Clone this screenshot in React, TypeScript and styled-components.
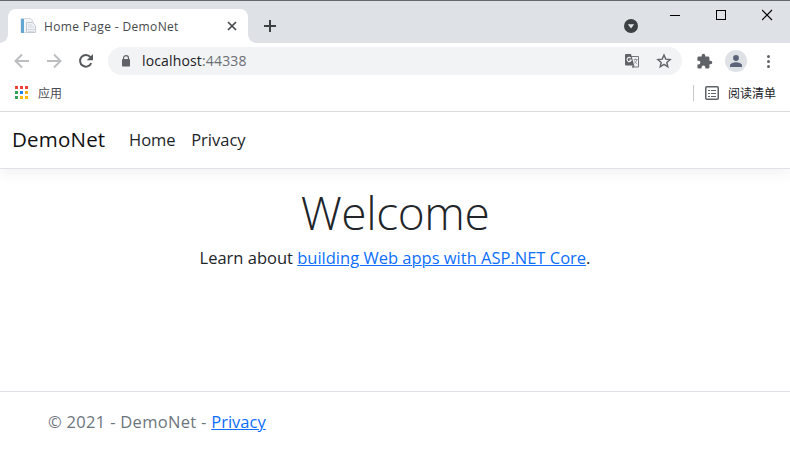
import React from "react";
import styled, { createGlobalStyle } from "styled-components";

const GlobalStyle = createGlobalStyle`
  * { box-sizing: border-box; }
  body {
    margin: 0;
    background: #fff;
    color: #212529;
    font-family: "Open Sans", "Noto Sans CJK SC", sans-serif;
    overflow: hidden;
  }
  svg { display: block; flex: none; }
`;

const Window = styled.div`
  width: 790px;
  height: 452px;
  display: flex;
  flex-direction: column;
  overflow: hidden;
`;

const TabStrip = styled.div`
  height: 43px;
  flex: none;
  display: flex;
  background: #dee1e6;
  border-top: 1px solid #66686c;
`;

const Tab = styled.div`
  position: relative;
  width: 240px;
  height: 34px;
  margin: 8px 0 0 8px;
  padding: 0 10px 0 12px;
  display: flex;
  align-items: center;
  background: #fff;
  border-radius: 8px 8px 0 0;
  &::before,
  &::after {
    content: "";
    position: absolute;
    bottom: 0;
    width: 8px;
    height: 8px;
  }
  &::before {
    left: -8px;
    background: radial-gradient(circle at 0 0, #dee1e6 7.5px, #fff 8px);
  }
  &::after {
    right: -8px;
    background: radial-gradient(circle at 100% 0, #dee1e6 7.5px, #fff 8px);
  }
`;

const TabTitle = styled.span`
  flex: 1;
  margin-left: 7px;
  padding-top: 1px;
  font-size: 12px;
  line-height: 16px;
  letter-spacing: 0.35px;
  color: #45494d;
  white-space: nowrap;
`;

const NewTab = styled.div`
  padding: 18px 0 0 15px;
  flex: 1;
`;

const TabSearch = styled.div`
  padding: 18px 0 0;
  margin-right: 32px;
`;

const WindowControls = styled.div`
  display: flex;
  gap: 35px;
  padding: 8px 17px 0 0;
`;

const Toolbar = styled.div`
  height: 36px;
  flex: none;
  display: flex;
  align-items: center;
  padding: 0 14px;
`;

const NavIcons = styled.div`
  display: flex;
  gap: 16px;
  width: 94px;
`;

const AddressBar = styled.div`
  width: 574px;
  height: 28px;
  border-radius: 14px;
  background: #f1f3f4;
  display: flex;
  align-items: center;
  padding: 0 10px 0 13px;
`;

const Url = styled.span`
  flex: 1;
  margin-left: 11px;
  font-size: 14px;
  line-height: 20px;
  letter-spacing: 0.15px;
  color: #202124;
  white-space: nowrap;
`;

const Port = styled.span`
  color: #6b6f74;
`;

const AddressActions = styled.div`
  display: flex;
  gap: 16px;
`;

const ToolbarActions = styled.div`
  flex: 1;
  display: flex;
  align-items: center;
  justify-content: flex-end;
`;

const Avatar = styled.div`
  width: 22px;
  height: 22px;
  border-radius: 50%;
  margin: 0 13px 0 12px;
  background: #dee1e6;
  display: flex;
  align-items: center;
  justify-content: center;
`;

const MenuButton = styled.div`
  width: 16px;
  padding-left: 6px;
`;

const BookmarkBar = styled.div`
  height: 33px;
  flex: none;
  display: flex;
  align-items: flex-start;
  justify-content: space-between;
  padding: 6px 14px 0 15px;
  border-bottom: 1px solid #dadce0;
  font-family: "Noto Sans CJK SC", sans-serif;
  font-size: 12px;
  line-height: 16px;
`;

const Bookmark = styled.div<{ $color: string; $gap: number }>`
  display: flex;
  align-items: center;
  gap: ${(p) => p.$gap}px;
  color: ${(p) => p.$color};
`;

const AppsButton = styled.span`
  padding-bottom: 1px;
`;

const Divider = styled.span`
  width: 1px;
  height: 16px;
  margin-right: 2px;
  background: #c6c9cd;
`;

const SiteNav = styled.nav`
  height: 57px;
  flex: none;
  display: flex;
  align-items: center;
  padding: 0 12px;
  border-bottom: 1px solid #dee2e6;
  box-shadow: 0 5px 12px rgba(0, 0, 0, 0.05);
`;

const Brand = styled.a`
  width: 117px;
  padding-bottom: 2px;
  font-size: 20.5px;
  line-height: 30px;
  letter-spacing: 0.2px;
  color: #111;
`;

const NavLink = styled.a`
  margin-right: 15.5px;
  font-size: 16.5px;
  line-height: 24px;
`;

const Main = styled.main`
  flex: 1;
  display: flex;
  flex-direction: column;
  align-items: center;
  padding-top: 14px;
`;

const Title = styled.h1`
  margin: 0;
  font-size: 46px;
  font-weight: 300;
  line-height: 58px;
  letter-spacing: -0.4px;
`;

const Lead = styled.p`
  margin: 5px 0 0;
  font-size: 16.5px;
  line-height: 24px;
  white-space: nowrap;
`;

const Link = styled.a`
  color: #0d6efd;
  text-decoration: underline;
  text-decoration-thickness: 1px;
  text-underline-offset: 1px;
`;

const Footer = styled.footer`
  height: 61px;
  flex: none;
  padding: 18px 48px 0;
  border-top: 1px solid #dee2e6;
  font-size: 16.5px;
  line-height: 24px;
  letter-spacing: 0.3px;
  color: #6c757d;
`;

const FooterLink = styled(Link)`
  letter-spacing: 0;
`;

const PageIcon = () => (
  <svg width="17" height="16" viewBox="0 0 17 16">
    <path d="M1 0.5h9l3 2v12H1z" fill="#f3f5f7" stroke="#d5dbe0" />
    <path d="M1 1h3v14H1z" fill="#62a7d2" />
    <path d="M6.5 4.5h6l3 3v7h-9z" fill="#f0f2f5" stroke="#c3c9d1" />
    <path d="M8 7h4M8 9h6M7 11.5h8M8 13.5h6" stroke="#d4dae1" />
  </svg>
);

const appColors = ["#ea4335", "#ea4335", "#ea4335", "#34a05a", "#1a83ee", "#f5ae16", "#34a05a", "#fbbc04", "#fbbc04"];

const AppsIcon = () => (
  <svg width="13" height="13" viewBox="0 0 13 13" shapeRendering="crispEdges">
    {appColors.map((c, i) => (
      <rect key={i} x={(i % 3) * 5} y={Math.floor(i / 3) * 5} width="3" height="3" fill={c} />
    ))}
  </svg>
);

const Arrow = ({ forward = false }: { forward?: boolean }) => (
  <svg width="16" height="16" viewBox="0 0 16 16" fill="none" stroke="#bbbdbf" strokeWidth="1.9">
    {forward ? <path d="M1 8h13M8 1.5L14.5 8 8 14.5" /> : <path d="M15 8H2M8 1.5L1.5 8 8 14.5" />}
  </svg>
);

const Reload = () => (
  <svg width="16" height="16" viewBox="0 0 16 16">
    <path d="M13.2 10.1A5.8 5.8 0 1 1 12.4 4.2" fill="none" stroke="#55595d" strokeWidth="2" />
    <path d="M15 1v6.3H8.7z" fill="#55595d" />
  </svg>
);

const Lock = () => (
  <svg width="10" height="12" viewBox="0 0 10 12">
    <path d="M2.5 5V3.2a2.5 2.5 0 0 1 5 0V5" fill="none" stroke="#5f6368" strokeWidth="1.2" />
    <rect x="1" y="4" width="8" height="7.5" rx="0.8" fill="#5f6368" />
  </svg>
);

const Translate = () => (
  <svg width="16" height="16" viewBox="0 0 16 16">
    <path d="M6 3.5h8.5v10.5H8" fill="none" stroke="#74787c" />
    <path d="M2 1h5l3.2 11.5H2a1 1 0 0 1-1-1V2a1 1 0 0 1 1-1z" fill="#5f6368" />
    <path d="M8.2 12.5h2.5L8.8 15z" fill="#5f6368" />
    <path d="M6.8 5.2A2.1 2.1 0 1 0 7.2 7H5.3" fill="none" stroke="#f1f3f4" strokeWidth="1.1" />
    <path d="M9.7 6.5h4M11.5 5.5v1M12.8 6.5c-.3 1.8-1.4 3-2.4 3.7M10.5 7.5c.4 1.3 1.4 2.5 2.7 3.5" fill="none" stroke="#85898c" strokeWidth=".8" />
  </svg>
);

const Star = () => (
  <svg width="16" height="16" viewBox="0 0 16 16">
    <path d="M8 2l1.75 4.1 4.4.4-3.35 2.9 1 4.35L8 11.4l-3.8 2.35 1-4.35-3.35-2.9 4.4-.4z" fill="none" stroke="#5f6368" strokeWidth="1.4" />
  </svg>
);

const Puzzle = () => (
  <svg width="17" height="17" viewBox="0 0 24 24" fill="#5f6368">
    <path d="M20.5 11H19V7c0-1.1-.9-2-2-2h-4V3.5a2.5 2.5 0 0 0-5 0V5H4c-1.1 0-2 .9-2 2v3.8h1.5a2.7 2.7 0 0 1 0 5.4H2V20c0 1.1.9 2 2 2h3.8v-1.5a2.7 2.7 0 0 1 5.4 0V22H17c1.1 0 2-.9 2-2v-4h1.5a2.5 2.5 0 0 0 0-5z" />
  </svg>
);

const Person = () => (
  <svg width="12" height="12" viewBox="0 0 12 12" fill="#5a6377">
    <circle cx="6" cy="3" r="2.9" />
    <path d="M0 12v-1.6C0 8 4 7.2 6 7.2s6 .8 6 3.2V12z" />
  </svg>
);

const More = () => (
  <svg width="5" height="14" viewBox="0 0 5 14" fill="#5f6368">
    <circle cx="2.5" cy="2.5" r="1.5" />
    <circle cx="2.5" cy="7.5" r="1.5" />
    <circle cx="2.5" cy="12.5" r="1.5" />
  </svg>
);

const ReadingList = () => (
  <svg width="14" height="14" viewBox="0 0 14 14">
    <rect x=".75" y=".75" width="12.5" height="12.5" rx="1" fill="none" stroke="#5f6368" strokeWidth="1.5" />
    <path d="M3 4.5h2M6 4.5h5M3 7.5h2M6 7.5h5M3 10.5h2M6 10.5h5" stroke="#5f6368" strokeWidth="1.2" />
  </svg>
);

export default function App() {
  return (
    <Window>
      <GlobalStyle />
      <TabStrip>
        <Tab>
          <PageIcon />
          <TabTitle>Home Page - DemoNet</TabTitle>
          <svg width="12" height="12" viewBox="0 0 12 12">
            <path d="M2 2l8 8M10 2l-8 8" stroke="#45494d" strokeWidth="1.7" />
          </svg>
        </Tab>
        <NewTab>
          <svg width="14" height="14" viewBox="0 0 14 14">
            <path d="M7 1v12M1 7h12" stroke="#3c4043" strokeWidth="2" />
          </svg>
        </NewTab>
        <TabSearch>
          <svg width="14" height="14" viewBox="0 0 14 14">
            <circle cx="7" cy="7" r="7" fill="#3c4043" />
            <path d="M3.8 5.2h6.4L7 9.6z" fill="#dee1e6" />
          </svg>
        </TabSearch>
        <WindowControls>
          <svg width="11" height="12" viewBox="0 0 11 12" shapeRendering="crispEdges">
            <path d="M0 6.5h10" stroke="#000" />
          </svg>
          <svg width="11" height="12" viewBox="0 0 11 12" shapeRendering="crispEdges">
            <path d="M.5 1.5h9v9h-9z" fill="none" stroke="#000" />
          </svg>
          <svg width="11" height="12" viewBox="0 0 11 12">
            <path d="M0 1l10 10M10 1l-10 10" stroke="#000" strokeWidth="1.1" />
          </svg>
        </WindowControls>
      </TabStrip>
      <Toolbar>
        <NavIcons>
          <Arrow />
          <Arrow forward />
          <Reload />
        </NavIcons>
        <AddressBar>
          <Lock />
          <Url>
            localhost<Port>:44338</Port>
          </Url>
          <AddressActions>
            <Translate />
            <Star />
          </AddressActions>
        </AddressBar>
        <ToolbarActions>
          <Puzzle />
          <Avatar>
            <Person />
          </Avatar>
          <MenuButton>
            <More />
          </MenuButton>
        </ToolbarActions>
      </Toolbar>
      <BookmarkBar>
        <Bookmark $color="#494c52" $gap={10}>
          <AppsButton>
            <AppsIcon />
          </AppsButton>
          <span>应用</span>
        </Bookmark>
        <Bookmark $color="#202124" $gap={9}>
          <Divider />
          <ReadingList />
          <span>阅读清单</span>
        </Bookmark>
      </BookmarkBar>
      <SiteNav>
        <Brand>DemoNet</Brand>
        <NavLink>Home</NavLink>
        <NavLink>Privacy</NavLink>
      </SiteNav>
      <Main>
        <Title>Welcome</Title>
        <Lead>
          Learn about <Link>building Web apps with ASP.NET Core</Link>.
        </Lead>
      </Main>
      <Footer>
        © 2021 - DemoNet - <FooterLink>Privacy</FooterLink>
      </Footer>
    </Window>
  );
}
